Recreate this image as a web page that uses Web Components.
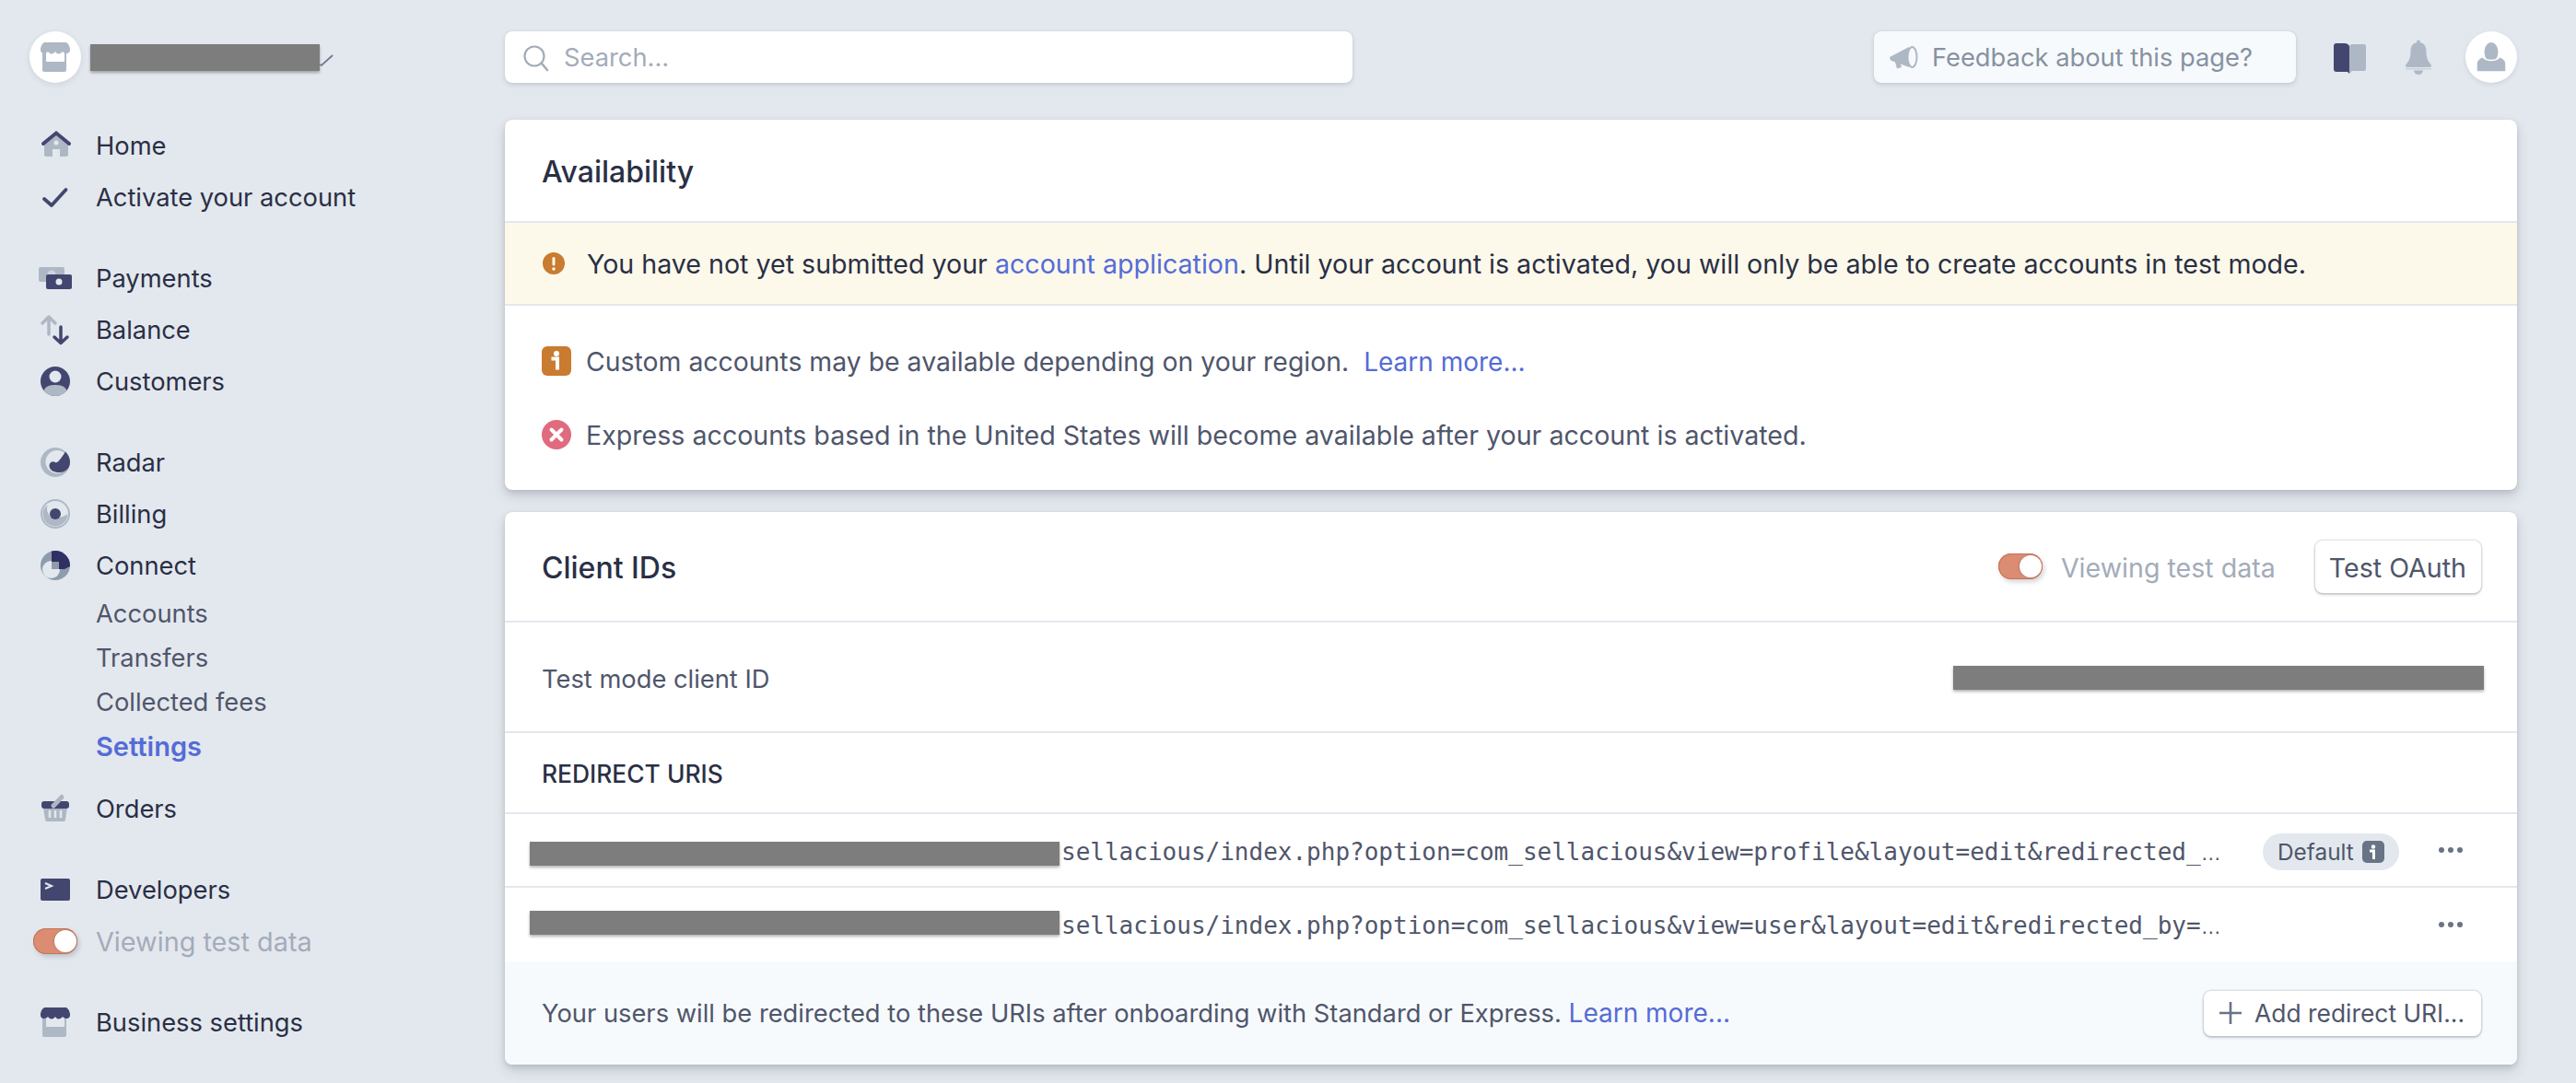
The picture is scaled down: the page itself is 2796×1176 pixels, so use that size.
<!doctype html>
<html>
<head>
<meta charset="utf-8">
<title>Connect settings</title>
<style>
  html, body { margin: 0; height: 100%; overflow: hidden; background: #e3e8ee; }
  body { font-family: Inter, "Noto Sans", sans-serif; font-size: 27.3px; color: #2a2f45; }
</style>
</head>
<body>
<app-shell>
  <side-nav slot="side">
    <account-row></account-row>
    <nav-group>
      <nav-item icon="home">Home</nav-item>
      <nav-item icon="check">Activate your account</nav-item>
    </nav-group>
    <nav-group>
      <nav-item icon="payments">Payments</nav-item>
      <nav-item icon="balance">Balance</nav-item>
      <nav-item icon="customers">Customers</nav-item>
    </nav-group>
    <nav-group>
      <nav-item icon="radar">Radar</nav-item>
      <nav-item icon="billing">Billing</nav-item>
      <nav-item icon="connect">Connect</nav-item>
      <nav-item sub>Accounts</nav-item>
      <nav-item sub>Transfers</nav-item>
      <nav-item sub>Collected fees</nav-item>
      <nav-item sub active>Settings</nav-item>
      <nav-item icon="orders" style="margin-top:16px">Orders</nav-item>
    </nav-group>
    <nav-group>
      <nav-item icon="developers">Developers</nav-item>
      <nav-item toggle muted>Viewing test data</nav-item>
    </nav-group>
    <nav-group>
      <nav-item icon="store">Business settings</nav-item>
    </nav-group>
  </side-nav>

  <top-bar slot="main"></top-bar>

  <ui-card slot="main">
    <card-row divider style="height:112px"><card-title>Availability</card-title></card-row>
    <card-row divider tone="warn" style="height:90px">
      <alert-line icon="warn" strong>You have not yet submitted your <ui-link>account application</ui-link>. Until your account is activated, you will only be able to create accounts in test mode.</alert-line>
    </card-row>
    <card-row stack style="height:200px">
      <alert-line icon="info" style="font-size:28.4px">Custom accounts may be available depending on your region.&nbsp; <ui-link style="font-size:28px">Learn more...</ui-link></alert-line>
      <alert-line icon="error">Express accounts based in the United States will become available after your account is activated.</alert-line>
    </card-row>
  </ui-card>

  <ui-card slot="main">
    <card-row divider style="height:120px">
      <card-title>Client IDs</card-title>
      <ui-spacer></ui-spacer>
      <ui-toggle></ui-toggle>
      <muted-label>Viewing test data</muted-label>
      <ui-btn>Test OAuth</ui-btn>
    </card-row>
    <card-row divider style="height:120px">
      <body-text style="padding-top:4px">Test mode client ID</body-text>
      <ui-spacer></ui-spacer>
      <redact-bar w="576" h="26" style="margin:2px -4px 0 0"></redact-bar>
    </card-row>
    <card-row divider style="height:88px"><caps-label>REDIRECT URIS</caps-label></card-row>
    <uri-row divider badge redact-shift="8" text-shift="4" path="sellacious/index.php?option=com_sellacious&amp;view=profile&amp;layout=edit&amp;redirected_"></uri-row>
    <uri-row redact-shift="-4" text-shift="2" path="sellacious/index.php?option=com_sellacious&amp;view=user&amp;layout=edit&amp;redirected_by="></uri-row>
    <card-row tone="foot" style="height:112px">
      <body-text>Your users will be redirected to these URIs after onboarding with Standard or Express. <ui-link style="font-size:28px">Learn more...</ui-link></body-text>
      <ui-spacer></ui-spacer>
      <ui-btn plus>Add redirect URI...</ui-btn>
    </card-row>
  </ui-card>
</app-shell>

<script>
const DARK = '#43476f'
const LIGHT = '#aeb8c5'
const BG = '#e3e8ee'

const storeIcon = (awning, body, hole) => `
  <path d="M6 12h20v-1h2v19a2 2 0 0 1-2 2H4a2 2 0 0 1-2-2V11h4z" fill="${body}"/>
  <rect x="6" y="12" width="20" height="9" fill="${hole}"/>
  <path d="M5 0h22c2 0 4 2 5 7 .4 2.500-1 5-3.500 5-2 0-3.500-1-4.500-2-1 1.500-3 2.500-4.500 2.500S17 11.500 16 10c-1 1.500-2.500 2.500-4 2.500S9 11.500 8 10c-1 1-2.500 2-4.500 2C1 12-.4 9.500 0 7 1 2 3 0 5 0z" fill="${awning}"/>`

// every icon sits in a 32x32 box, some stick out a little on purpose
const ICONS = {
  home: `<path d="M17 5 30 15v11a2 2 0 0 1-2 2h-7v-8h-8v8H6a2 2 0 0 1-2-2V15z" fill="${LIGHT}"/>
    <circle cx="17" cy="13" r="2.500" fill="${BG}"/>
    <path d="M3 14 17 2.500 31 14" fill="none" stroke="${DARK}" stroke-width="4" stroke-linecap="round"/>`,
  check: `<path d="M4 18 12 25 27.500 8" fill="none" stroke="${DARK}" stroke-width="3.800" stroke-linecap="round" stroke-linejoin="round"/>`,
  payments: `<rect x="-2" y="4" width="28" height="16" rx="2" fill="${LIGHT}"/>
    <circle cx="12" cy="12" r="4.500" fill="${BG}" opacity=".6"/>
    <rect x="6" y="12" width="28" height="16" rx="2" fill="${DARK}"/>
    <circle cx="20" cy="20" r="3.500" fill="${BG}"/>`,
  balance: `<path d="M9 21V2M2 9l7-7 7 7" fill="none" stroke="${LIGHT}" stroke-width="3.500" stroke-linecap="round" stroke-linejoin="round"/>
    <path d="M22 13v17M15 24l7 6.500 7-6.500" fill="none" stroke="${DARK}" stroke-width="3.500" stroke-linecap="round" stroke-linejoin="round"/>`,
  customers: `<circle cx="16" cy="16" r="16" fill="${DARK}"/>
    <path d="M3.500 26C6 20.500 11 20 16 20s10 .5 12.500 6A16 16 0 0 1 3.500 26z" fill="${LIGHT}"/>
    <circle cx="16" cy="11" r="6.500" fill="${BG}"/>`,
  radar: `<circle cx="16" cy="16" r="16" fill="${LIGHT}"/>
    <circle cx="18" cy="15.500" r="12.500" fill="${BG}"/>
    <path d="M27 4.500C30.500 8 32 12 32 16c0 6.500-5 11-12 11-5 0-10-2-10.500-7-.3-4 3.500-6 6.500-4 2 1.500 6-3.500 11-11.500z" fill="${DARK}"/>`,
  billing: `<circle cx="16" cy="16" r="16" fill="${LIGHT}"/>
    <circle cx="16" cy="16" r="14" fill="${BG}"/>
    <path d="M2.500 16c0-5 2.500-8 5.500-9.500C6 10 7 14 10 18c3 3 9 3.500 19.500-1.500C29 24 23 29.500 16 29.500S2.500 24 2.500 16z" fill="${LIGHT}"/>
    <circle cx="16" cy="16" r="6" fill="${DARK}"/>`,
  connect: `<circle cx="16" cy="16" r="16" fill="#8e9cac"/>
    <circle cx="11.500" cy="20.500" r="9.500" fill="${BG}"/>
    <path d="M12 .5A16 16 0 0 1 32 17l-6 3H12z" fill="#2f3163"/>
    <rect x="12" y="12" width="8" height="8" fill="#8e9cac"/>`,
  orders: `<path d="M3 15h26l-2 13a2 2 0 0 1-2 2H7a2 2 0 0 1-2-2z" fill="${LIGHT}"/>
    <path d="M10 18v8M16 18v8M22 18v8" stroke="${BG}" stroke-width="2.500"/>
    <rect x="1" y="8" width="30" height="8" rx="3" fill="${DARK}"/>
    <path d="M14 13 23 3.500" stroke="${LIGHT}" stroke-width="5" stroke-linecap="round"/>`,
  developers: `<rect y="4" width="32" height="24" rx="2" fill="${DARK}"/>
    <path d="M5 9 12 12 5 15" fill="none" stroke="${BG}" stroke-width="2"/>`,
  store: storeIcon(DARK, LIGHT, BG),
  logo: storeIcon(LIGHT, LIGHT, '#fff'),
  search: `<circle cx="12" cy="12" r="10.500" fill="none" stroke="#a3acb9" stroke-width="2.200"/>
    <path d="M20 20 26 27" stroke="#a3acb9" stroke-width="2.600" stroke-linecap="round"/>`,
  megaphone: `<path d="M1 12 22 1v22L13 19.500l1 3.500-5 1.500-2-7L2 15.500z" fill="${LIGHT}"/>
    <ellipse cx="25.500" cy="12" rx="5" ry="11" fill="#f7fafc" stroke="${LIGHT}" stroke-width="2"/>`,
  book: `<path d="M17 4v29l-2-2H3a3 3 0 0 1-3-3V3a3 3 0 0 1 3-3h8c3 0 6 1 6 4z" fill="${DARK}"/>
    <path d="M17 4c0-3 3-3 5-3h11a2 2 0 0 1 2 2v25a2 2 0 0 1-2 2H20l-3 3z" fill="${LIGHT}"/>`,
  bell: `<circle cx="15" cy="2.500" r="2" fill="${LIGHT}"/>
    <path d="M15 3c6 0 8.500 4 8.500 10 0 6 1.500 10 5 14 1 1.500 .5 3-1.500 3H3c-2 0-2.500-1.500-1.500-3 3.500-4 5-8 5-14 0-6 2.500-10 8.500-10z" fill="${LIGHT}"/>
    <rect x="1" y="31" width="28" height="1.500" fill="#c8d0da"/>
    <path d="M10 33.500h10c-.5 3-2.500 4.500-5 4.500s-4.500-1.500-5-4.500z" fill="${LIGHT}"/>`,
  person: `<ellipse cx="16" cy="10.500" rx="7.500" ry="10.500" fill="${LIGHT}"/>
    <path d="M0 32v-9c0-4 3-6 7-7.500 1.500 3 5 4 9 4s7.500-1 9-4c4 1.500 7 3.500 7 7.500v9z" fill="${LIGHT}" stroke="#fff" stroke-width="1.500"/>`,
  warn: `<circle cx="12" cy="12" r="12" fill="#c97b30"/>
    <rect x="10.500" y="5" width="3" height="9.500" rx="1.500" fill="#fdf9ea"/>
    <circle cx="12" cy="18" r="1.800" fill="#fdf9ea"/>`,
  info: `<rect width="32" height="32" rx="6" fill="#c97b30"/>
    <circle cx="16" cy="8" r="3" fill="#fff"/>
    <path d="M10.500 13.500H17v12" fill="none" stroke="#fff" stroke-width="4"/>`,
  error: `<circle cx="16" cy="16" r="16" fill="#e06a7e"/>
    <path d="M10.500 10.500l11 11M21.500 10.500l-11 11" stroke="#fff" stroke-width="4" stroke-linecap="round"/>`,
  badgeinfo: `<rect width="24" height="24" rx="5" fill="#697386"/>
    <circle cx="12" cy="6.500" r="2.200" fill="#fff"/>
    <path d="M8 11h4.500v9" fill="none" stroke="#fff" stroke-width="3"/>`,
  dots: `<circle cx="3" cy="4" r="3" fill="#697386"/><circle cx="13" cy="4" r="3" fill="#697386"/><circle cx="23" cy="4" r="3" fill="#697386"/>`,
  plus: `<path d="M12 0v24M0 12h24" stroke="#697386" stroke-width="2.600"/>`
}

class BaseEl extends HTMLElement {
  constructor() {
    super()
    this.attachShadow({ mode: 'open' })
  }
  connectedCallback() {
    this.shadowRoot.innerHTML = this.markup()
  }
}

class UiIcon extends BaseEl {
  markup() {
    const w = this.getAttribute('w') || 32
    const h = this.getAttribute('h') || 32
    return `<style>:host { display: inline-flex; flex: none; } svg { overflow: visible; display: block; }</style>
      <svg width="${w}" height="${h}" viewBox="0 0 ${w} ${h}">${ICONS[this.getAttribute('name')]}</svg>`
  }
}

class AppShell extends BaseEl {
  markup() {
    return `<style>
      :host { display: grid; grid-template-columns: 548px 2184px; height: 1176px; }
      .main { display: flex; flex-direction: column; gap: 24px; padding-top: 34px; }
    </style>
    <slot name="side"></slot>
    <div class="main"><slot name="main"></slot></div>`
  }
}

class SideNav extends BaseEl {
  markup() {
    return `<style>:host { display: flex; flex-direction: column; gap: 32px; padding: 34px 0 0 32px; }</style><slot></slot>`
  }
}

class NavGroup extends BaseEl {
  markup() {
    return `<style>:host { display: flex; flex-direction: column; }</style><slot></slot>`
  }
}

class AccountRow extends BaseEl {
  markup() {
    return `<style>
      :host { display: flex; align-items: center; height: 56px; margin-bottom: 8px; }
      .logo { width: 56px; height: 56px; border-radius: 50%; background: #fff; display: flex; align-items: center; justify-content: center; box-shadow: 0 2px 6px rgba(60,66,87,.12); }
      redact-bar { margin-left: 10px; }
      svg { margin: 10px 0 0 0; overflow: visible; }
    </style>
    <div class="logo"><ui-icon name="logo"></ui-icon></div>
    <redact-bar w="249" h="29"></redact-bar>
    <svg width="16" height="14" viewBox="0 0 16 14"><path d="M0 10l2 1L14 0" fill="none" stroke="#6d7a8f" stroke-width="1.800"/></svg>`
  }
}

class NavItem extends BaseEl {
  markup() {
    const icon = this.getAttribute('icon')
    let lead = ''
    if (icon) lead = `<ui-icon name="${icon}"></ui-icon>`
    if (this.hasAttribute('toggle')) lead = `<ui-toggle></ui-toggle>`
    const sub = this.hasAttribute('sub')
    const active = this.hasAttribute('active')
    const muted = this.hasAttribute('muted')
    const color = active ? '#556cd6' : muted ? '#a3acb9' : sub ? '#4f566b' : '#2a2f45'
    return `<style>
      :host { display: flex; align-items: center; height: ${sub ? 48 : 56}px; color: ${color}; font-weight: ${active ? 600 : 400}; font-size: ${active ? 29 : muted ? 28.8 : 27.3}px; }
      .lead { width: 56px; display: flex; justify-content: center; margin-right: 16px; }
    </style>
    <div class="lead">${lead}</div><slot></slot>`
  }
}

class UiToggle extends BaseEl {
  markup() {
    return `<style>
      :host { display: inline-flex; flex: none; justify-content: flex-end; align-items: center; box-sizing: border-box; width: 48px; height: 28px; padding-right: 1px; border-radius: 14px; background: #dc8c72; box-shadow: inset 0 0 0 1px #c2745a, 2px 3px 5px rgba(60,66,87,.22); }
      i { display: block; width: 24px; height: 24px; border-radius: 50%; background: #fff; box-shadow: -1px 0 2px rgba(60,66,87,.2); }
    </style><i></i>`
  }
}

class TopBar extends BaseEl {
  markup() {
    return `<style>
      :host { display: flex; align-items: center; height: 56px; margin-bottom: 16px; }
      .field { display: flex; align-items: center; box-sizing: border-box; height: 56px; border-radius: 8px; box-shadow: 0 2px 5px rgba(60,66,87,.18), 0 0 1px rgba(60,66,87,.2); }
      .search { width: 920px; background: #fff; color: #a3acb9; padding-left: 20px; gap: 18px; }
      .feedback { width: 458px; margin-left: 566px; background: #f7fafc; color: #8792a2; padding-left: 16px; gap: 16px; }
      .book { margin-left: 41px; }
      .bell { margin-left: 42px; }
      .me { width: 56px; height: 56px; margin-left: 36px; border-radius: 50%; background: #fff; display: flex; align-items: center; justify-content: center; box-shadow: 0 2px 5px rgba(60,66,87,.12); }
    </style>
    <div class="field search"><ui-icon name="search" w="26" h="26"></ui-icon><span>Search...</span></div>
    <div class="field feedback"><ui-icon name="megaphone" w="31" h="24"></ui-icon><span>Feedback about this page?</span></div>
    <ui-icon class="book" name="book" w="35" h="30"></ui-icon>
    <ui-icon class="bell" name="bell" w="30" h="38"></ui-icon>
    <div class="me"><ui-icon name="person" w="32" h="32"></ui-icon></div>`
  }
}

class UiCard extends BaseEl {
  markup() {
    return `<style>
      :host { display: flex; flex-direction: column; background: #fff; border-radius: 8px; overflow: hidden;
        box-shadow: 0 0 1px rgba(60,66,87,.2), 0 7px 14px rgba(60,66,87,.16), 0 3px 6px rgba(0,0,0,.1); }
    </style><slot></slot>`
  }
}

class CardRow extends BaseEl {
  markup() {
    const bg = { warn: '#fcf9ea', foot: '#f7fafc' }[this.getAttribute('tone')] || 'transparent'
    const stack = this.hasAttribute('stack')
    return `<style>
      :host { display: flex; flex: none; box-sizing: border-box; padding: ${stack ? '20px' : '0'} 40px; background: ${bg};
        flex-direction: ${stack ? 'column' : 'row'}; align-items: ${stack ? 'stretch' : 'center'};
        border-bottom: ${this.hasAttribute('divider') ? '2px solid #e3e8ee' : '0'}; }
    </style><slot></slot>`
  }
}

class UriRow extends BaseEl {
  markup() {
    const path = this.getAttribute('path').replace(/&/g, '&amp;')
    const shift = Number(this.getAttribute('redact-shift'))
    const badge = this.hasAttribute('badge')
      ? `<span class="badge">Default<ui-icon name="badgeinfo" w="24" h="24"></ui-icon></span>` : ''
    return `<style>
      :host { display: flex; flex: none; align-items: center; box-sizing: border-box; height: 80px; padding: 0 59px 0 27px; border-bottom: ${this.hasAttribute('divider') ? '2px solid #e3e8ee' : '0'}; }
      redact-bar { margin: ${shift > 0 ? shift : 0}px 0 ${shift < 0 ? -shift : 0}px 0; }
      .uri { width: 1259px; margin-left: 2px; padding-top: ${this.getAttribute('text-shift')}px; font: 26px "DejaVu Sans Mono", monospace; color: #4f566b; white-space: nowrap; }
      .uri span { font-family: "Liberation Sans", sans-serif; font-size: 22px; }
      .badge { display: inline-flex; align-items: center; gap: 9px; box-sizing: border-box; height: 40px; padding: 0 16px; margin: 4px 0 0 45px; border-radius: 20px; background: #e3e8ee; color: #4f566b; font-size: 24.400px; white-space: nowrap; }
      ui-icon[name=dots] { margin-left: auto; }
    </style>
    <redact-bar w="575" h="26"></redact-bar>
    <div class="uri">${path}<span>…</span></div>${badge}
    <ui-icon name="dots" w="26" h="8"></ui-icon>`
  }
}

class RedactBar extends BaseEl {
  markup() {
    return `<style>
      :host { display: block; flex: none; width: ${this.getAttribute('w')}px; height: ${this.getAttribute('h')}px; background: #7d7d7d; box-shadow: 0 2px 3px rgba(0,0,0,.3); }
    </style>`
  }
}

class AlertLine extends BaseEl {
  markup() {
    const strong = this.hasAttribute('strong')
    return `<style>
      :host { display: flex; align-items: center; height: ${strong ? 'auto' : '80px'}; color: ${strong ? '#2a2f45' : '#4f566b'}; font-size: 28.600px; }
      ui-icon { margin-right: 16px; }
      :host([strong]) ui-icon { margin: 0 24px 0 1px; }
      span { white-space: pre; }
    </style>
    <ui-icon name="${this.getAttribute('icon')}" ${strong ? 'w="24" h="24"' : ''}></ui-icon><span><slot></slot></span>`
  }
}

class UiBtn extends BaseEl {
  markup() {
    const plus = this.hasAttribute('plus')
    return `<style>
      :host { display: inline-flex; flex: none; align-items: center; gap: 14px; box-sizing: border-box; height: ${plus ? 49 : 57}px; padding: ${plus ? 0 : 2}px ${plus ? 18 : 16}px 0 ${plus ? 17 : 15}px; margin-right: -1px; border-radius: 8px; background: #fff; color: #4f566b; font-size: ${plus ? 26.4 : 28.6}px; white-space: nowrap; box-shadow: 0 0 0 1.500px rgba(60,66,87,.12), 0 2px 3px rgba(60,66,87,.22); }
    </style>${plus ? '<ui-icon name="plus" w="24" h="24"></ui-icon>' : ''}<slot></slot>`
  }
}

// small text pieces that only differ by their type settings
const textEl = (css) => class extends BaseEl {
  markup() { return `<style>:host { ${css} }</style><slot></slot>` }
}

customElements.define('redact-bar', RedactBar)
customElements.define('ui-icon', UiIcon)
customElements.define('ui-toggle', UiToggle)
customElements.define('app-shell', AppShell)
customElements.define('side-nav', SideNav)
customElements.define('nav-group', NavGroup)
customElements.define('account-row', AccountRow)
customElements.define('nav-item', NavItem)
customElements.define('top-bar', TopBar)
customElements.define('ui-card', UiCard)
customElements.define('card-row', CardRow)
customElements.define('uri-row', UriRow)
customElements.define('alert-line', AlertLine)
customElements.define('ui-btn', UiBtn)
customElements.define('ui-link', textEl('color: #556cd6;'))
customElements.define('ui-spacer', textEl('flex: 1;'))
customElements.define('card-title', textEl('font-size: 32px; color: #2a2f45; font-weight: 500; padding-top: 2px;'))
customElements.define('body-text', textEl('color: #4f566b;'))
customElements.define('caps-label', textEl('font-size: 26.400px; font-weight: 500; color: #2a2f45; padding-top: 2px;'))
customElements.define('muted-label', textEl('color: #a3acb9; font-size: 28.600px; margin: 0 43px 0 20px; padding-top: 2px;'))
</script>
</body>
</html>
